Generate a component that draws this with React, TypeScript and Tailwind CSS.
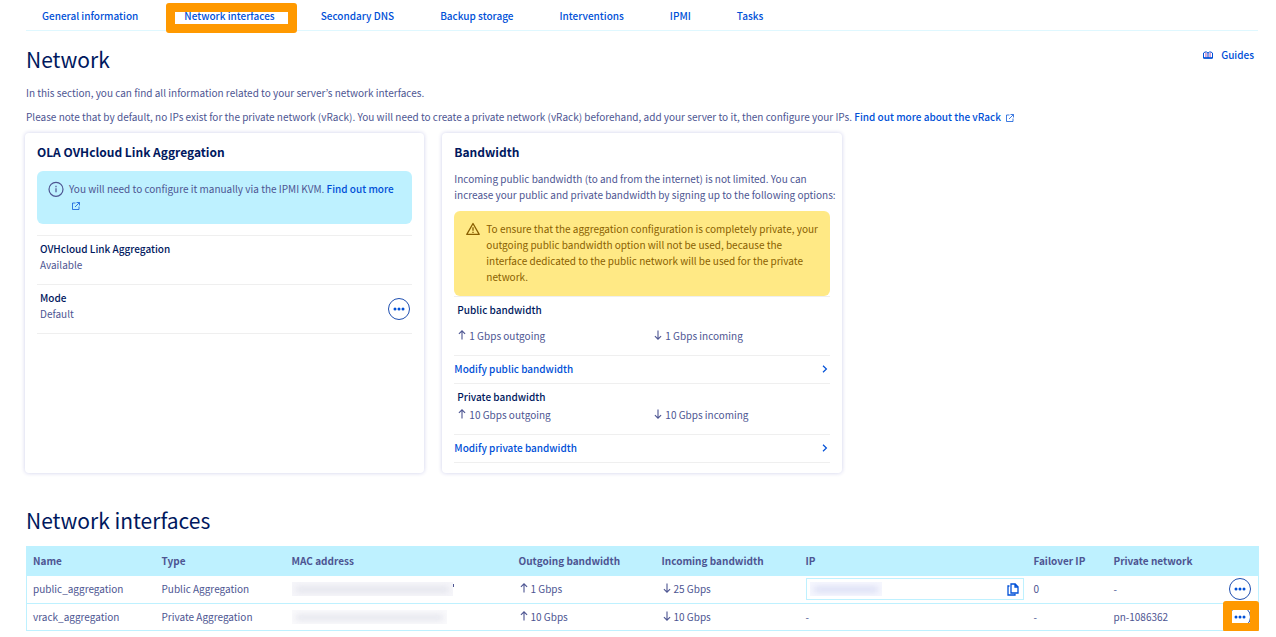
import type { ReactNode } from "react";

const tabs = [
  "General information",
  "Network interfaces",
  "Secondary DNS",
  "Backup storage",
  "Interventions",
  "IPMI",
  "Tasks",
];

function ExternalIcon() {
  return (
    <svg width="8" height="8" viewBox="0 0 8 8" fill="none" stroke="currentColor" className="inline-block">
      <path d="M3.5 1H.5v6.5H7V4.5M4.5.5h3v3M7.3.7 3 5" opacity=".75" />
    </svg>
  );
}

function ArrowIcon({ down = false }: { down?: boolean }) {
  return (
    <svg width="8" height="10" viewBox="0 0 8 10" fill="none" stroke="currentColor" strokeWidth="1.1" className="mb-[2px] shrink-0">
      {down ? <path d="M4 .5v8.7M.9 6.1 4 9.2l3.1-3.1" /> : <path d="M4 9.5V.8M.9 3.9 4 .8l3.1 3.1" />}
    </svg>
  );
}

function ChevronIcon() {
  return (
    <svg width="6" height="8" viewBox="0 0 6 8" fill="none" stroke="currentColor" strokeWidth="1.2">
      <path d="M1 .8 4.4 4 1 7.2" />
    </svg>
  );
}

function InfoIcon() {
  return (
    <svg width="16" height="16" viewBox="0 0 16 16" fill="none" stroke="currentColor" strokeWidth="1.2" className="shrink-0">
      <circle cx="8" cy="8.3" r="7" />
      <path d="M8 7.3v4M8 4.8v1.4" />
    </svg>
  );
}

function WarningIcon() {
  return (
    <svg width="16" height="16" viewBox="0 0 16 16" fill="none" stroke="currentColor" strokeWidth="1.3" strokeLinejoin="round" className="shrink-0">
      <path d="M8 2.5 14.2 13.4H1.8z" />
      <path d="M8 6.2v3.6M8 10.8V12" />
    </svg>
  );
}

function CopyIcon() {
  return (
    <svg width="12" height="13" viewBox="0 0 12 13" fill="none" stroke="currentColor" strokeWidth="1.3">
      <path d="M4 1h4.2L11 3.8V10H4zM8 1v3h3" />
      <path d="M2.5 3H1v9h7v-1.3" />
    </svg>
  );
}

function GuidesIcon() {
  return (
    <svg width="10" height="8" viewBox="0 0 10 8" fill="none" stroke="currentColor">
      <path d="M.5 2v5h9V2M.5 2 2 1h1.5L5 2l1.5-1H8l1.5 1M5 2v5" />
      <path d="M2.5 1.5V6M7.5 1.5V6M3.7 2v4M6.3 2v4" stroke="#a03fb0" opacity=".5" />
      <path d="M.5 7h9" strokeWidth="1.5" />
    </svg>
  );
}

function MoreButton({ label }: { label: string }) {
  return (
    <button
      type="button"
      aria-label={label}
      className="flex size-[22px] shrink-0 items-center justify-center rounded-full border border-[#1f4fb0] bg-white text-[#0050d7]"
    >
      <svg width="12" height="4" viewBox="0 0 12 4" fill="currentColor">
        <circle cx="2" cy="2" r="1.5" />
        <circle cx="6" cy="2" r="1.5" />
        <circle cx="10" cy="2" r="1.5" />
      </svg>
    </button>
  );
}

function Card({ title, children }: { title: string; children: ReactNode }) {
  return (
    <section className="rounded bg-white px-3 pt-[11px] pb-[10px] shadow-[0_0_4px_#000e9c33]">
      <h3 className="text-xs leading-4 font-bold text-[#00185e]">{title}</h3>
      {children}
    </section>
  );
}

function Speed({ down = false, children }: { down?: boolean; children: ReactNode }) {
  return (
    <span className="flex items-center gap-[3px] pl-px">
      <ArrowIcon down={down} />
      {children}
    </span>
  );
}

function ModifyLink({ children }: { children: ReactNode }) {
  return (
    <a href="#" className="flex items-center justify-between border-y border-[#efefef] pt-[5px] pr-[2px] pb-[6px] font-medium text-[#0050d7]">
      {children}
      <ChevronIcon />
    </a>
  );
}

const cell = "px-[6px] py-[5px]";

export default function App() {
  return (
    <main className="bg-white pr-[18px] pl-[26px] font-['Noto_Sans_CJK_KR','Open_Sans',sans-serif] text-[10px] leading-4 text-[#4d5592]">
      <nav className="flex gap-[14px] border-b border-[#dff8ff] pt-2 pb-[6px]">
        {tabs.map((tab, i) => (
          <a key={tab} href="#" className="relative px-4 font-medium text-[#0050d7]">
            {tab}
            {i === 1 && (
              <span className="absolute -top-[5px] -right-[6px] -left-[2px] h-[30px] rounded-[3px] border-9 border-[#ff9900]" />
            )}
          </a>
        ))}
      </nav>

      <header className="flex items-start justify-between pt-3">
        <h1 className="text-[21px] leading-8 text-[#00185e]">Network</h1>
        <a href="#" className="mt-1 mr-1 flex items-center gap-2 font-medium text-[#0050d7]">
          <GuidesIcon />
          Guides
        </a>
      </header>

      <p className="mt-[10px]">
        In this section, you can find all information related to your server’s network interfaces.
      </p>
      <p className="mt-2">
        Please note that by default, no IPs exist for the private network (vRack). You will need to create a private
        network (vRack) beforehand, add your server to it, then configure your IPs.{" "}
        <a href="#" className="font-medium text-[#0050d7]">
          Find out more about the vRack <span className="ml-[3px]"><ExternalIcon /></span>
        </a>
      </p>

      <div className="-mx-px mt-2 grid grid-cols-3 gap-[18px]">
        <Card title="OLA OVHcloud Link Aggregation">
          <div className="mt-[11px] flex gap-[5px] rounded-md bg-[#bef1ff] pt-[10px] pr-4 pb-[11px] pl-[11px]">
            <InfoIcon />
            <p>
              You will need to configure it manually via the IPMI KVM.{" "}
              <a href="#" className="font-medium text-[#0050d7]">
                Find out more <span className="ml-[3px] inline-block"><ExternalIcon /></span>
              </a>
            </p>
          </div>
          <dl className="mt-[11px] border-b border-[#efefef]">
            <div className="border-t border-[#efefef] px-[3px] pt-[5px] pb-[11px]">
              <dt className="font-medium text-[#00185e]">OVHcloud Link Aggregation</dt>
              <dd>Available</dd>
            </div>
            <div className="flex items-center justify-between border-t border-[#efefef] pr-[2px] pl-[3px]">
              <div className="pt-[5px] pb-[11px]">
                <dt className="font-medium text-[#00185e]">Mode</dt>
                <dd>Default</dd>
              </div>
              <MoreButton label="Mode actions" />
            </div>
          </dl>
        </Card>

        <Card title="Bandwidth">
          <p className="mt-[11px] -mr-2">
            Incoming public bandwidth (to and from the internet) is not limited. You can increase your public and
            private bandwidth by signing up to the following options:
          </p>
          <div className="mt-2 flex gap-[5px] rounded-md bg-[#ffe985] pt-[10px] pr-2 pb-[11px] pl-[11px] text-[#8a5f00]">
            <WarningIcon />
            <p>
              To ensure that the aggregation configuration is completely private, your outgoing public bandwidth option
              will not be used, because the interface dedicated to the public network will be used for the private
              network.
            </p>
          </div>
          <div className="border-t border-[#efefef] px-[3px] pt-[5px] pb-[11px]">
            <h4 className="font-medium text-[#00185e]">Public bandwidth</h4>
            <div className="mt-[10px] grid grid-cols-[196px_1fr]">
              <Speed>1 Gbps outgoing</Speed>
              <Speed down>1 Gbps incoming</Speed>
            </div>
          </div>
          <ModifyLink>Modify public bandwidth</ModifyLink>
          <div className="px-[3px] pt-[5px] pb-[11px]">
            <h4 className="font-medium text-[#00185e]">Private bandwidth</h4>
            <div className="mt-[2px] grid grid-cols-[196px_1fr]">
              <Speed>10 Gbps outgoing</Speed>
              <Speed down>10 Gbps incoming</Speed>
            </div>
          </div>
          <ModifyLink>Modify private bandwidth</ModifyLink>
        </Card>
      </div>

      <h2 className="mt-[31px] text-[21px] leading-8 text-[#00185e]">Network interfaces</h2>

      <table className="mt-[10px] w-full table-fixed border-collapse border border-[#bef1ff] text-left">
        <colgroup>
          <col className="w-[129px]" />
          <col className="w-[130px]" />
          <col className="w-[227px]" />
          <col className="w-[143px]" />
          <col className="w-[144px]" />
          <col className="w-[228px]" />
          <col className="w-[80px]" />
          <col className="w-[115px]" />
          <col className="w-[36px]" />
        </colgroup>
        <thead className="bg-[#bef1ff]">
          <tr className="h-[29px] font-bold">
            <th className={cell}>Name</th>
            <th className={cell}>Type</th>
            <th className={cell}>MAC address</th>
            <th className={cell}>Outgoing bandwidth</th>
            <th className={cell}>Incoming bandwidth</th>
            <th className={cell}>IP</th>
            <th className={cell}>Failover IP</th>
            <th className={cell}>Private network</th>
            <th aria-label="Actions" />
          </tr>
        </thead>
        <tbody>
          <tr className="h-7 border-b border-[#bef1ff]">
            <td className={cell}>public_aggregation</td>
            <td className={cell}>Public Aggregation</td>
            <td className="px-[6px]">
              <div className="flex items-start">
                <div className="flex h-[14px] w-[161px] items-center overflow-hidden bg-[#f6f6fa] px-1">
                  <div className="h-[5px] w-full bg-[#e0e1ea] blur-[3px]" />
                </div>
                <div className="mt-[2px] h-[3px] w-px bg-[#4d5592]" />
              </div>
            </td>
            <td className="px-[6px]"><Speed>1 Gbps</Speed></td>
            <td className="px-[6px]"><Speed down>25 Gbps</Speed></td>
            <td className="pr-1 pl-[6px]">
              <div className="flex h-[22px] items-center justify-between border border-[#bef1ff] pr-1 pl-[3px]">
                <div className="flex h-[14px] w-[72px] items-center overflow-hidden bg-[#f6f7fe] px-1">
                  <div className="h-[5px] w-full bg-[#d5d9f3] blur-[3px]" />
                </div>
                <button type="button" aria-label="Copy IP" className="text-[#0050d7]"><CopyIcon /></button>
              </div>
            </td>
            <td className={cell}>0</td>
            <td className={cell}>-</td>
            <td><div className="flex justify-center"><MoreButton label="public_aggregation actions" /></div></td>
          </tr>
          <tr className="h-[27px]">
            <td className={cell}>vrack_aggregation</td>
            <td className={cell}>Private Aggregation</td>
            <td className="px-[6px]">
              <div className="flex h-[14px] w-[155px] items-center overflow-hidden bg-[#fafafc] px-1">
                <div className="h-[5px] w-full bg-[#e0e1ea] blur-[3px]" />
              </div>
            </td>
            <td className="px-[6px]"><Speed>10 Gbps</Speed></td>
            <td className="px-[6px]"><Speed down>10 Gbps</Speed></td>
            <td className={cell}>-</td>
            <td className={cell}>-</td>
            <td className={cell}>pn-1086362</td>
            <td className="relative">
              <div className="flex justify-center"><MoreButton label="vrack_aggregation actions" /></div>
              <span className="pointer-events-none absolute -top-[3px] -right-px h-[31px] w-9 rounded-[3px] border-9 border-[#ff9900]" />
            </td>
          </tr>
        </tbody>
      </table>
    </main>
  );
}
